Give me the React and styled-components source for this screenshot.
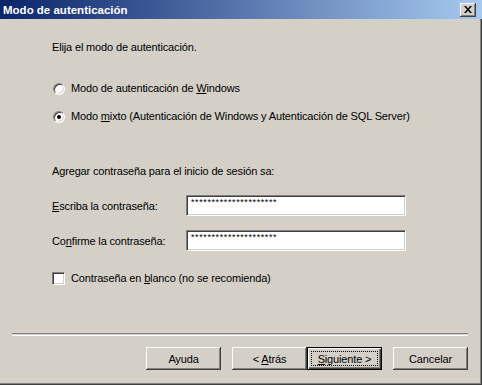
import React from "react";
import styled, { createGlobalStyle } from "styled-components";

const Global = createGlobalStyle`
  html, body { margin: 0; padding: 0; background: #d4d0c8; }
  body { font-family: "Liberation Sans", Arial, sans-serif; font-size: 11px; color: #000; letter-spacing: -0.15px; }
`;

const Window = styled.div`
  width: 482px;
  height: 385px;
  box-sizing: border-box;
  background: #d4d0c8;
  display: flex;
  flex-direction: column;
  box-shadow: inset -1px -1px 0 #404040, inset -2px -2px 0 #808080;
  overflow: hidden;
`;

const TitleBar = styled.div`
  height: 19px;
  flex: none;
  display: flex;
  align-items: center;
  justify-content: space-between;
  padding: 0 6px 0 3px;
  background: linear-gradient(to right, #0a246a, #a6caf0);
`;

const Title = styled.span`
  color: #fff;
  font-weight: bold;
  font-size: 11.5px;
  letter-spacing: 0;
`;

const CloseBtn = styled.div`
  width: 16px;
  height: 14px;
  box-sizing: border-box;
  background: #d4d0c8;
  display: flex;
  align-items: center;
  justify-content: center;
  box-shadow: inset -1px -1px 0 #404040, inset 1px 1px 0 #fff, inset -2px -2px 0 #808080;
`;

const Body = styled.div`
  flex: 1;
  padding: 22px 0 0 52px;
  display: flex;
  flex-direction: column;
`;

const Line = styled.div`
  height: 13px;
  line-height: 13px;
  white-space: nowrap;
  margin-top: ${(p) => p.$top || 0}px;
`;

const OptionRow = styled.label`
  display: flex;
  align-items: center;
  gap: 6px;
  height: 13px;
  line-height: 13px;
  white-space: nowrap;
  margin-top: ${(p) => p.$top || 0}px;
  margin-left: ${(p) => p.$left || 0}px;
`;

const Radio = styled.span`
  width: 12px;
  height: 12px;
  box-sizing: border-box;
  border-radius: 50%;
  background: #fff;
  border: 1px solid;
  border-color: #808080 #fff #fff #808080;
  box-shadow: inset 1px 1px 0 #404040, inset -1px -1px 0 #d4d0c8;
  display: flex;
  align-items: center;
  justify-content: center;
  &::after {
    content: "";
    width: 4px;
    height: 4px;
    border-radius: 50%;
    background: ${(p) => (p.$checked ? "#000" : "transparent")};
  }
`;

const Check = styled.span`
  width: 13px;
  height: 13px;
  box-sizing: border-box;
  background: #fff;
  border: 1px solid;
  border-color: #808080 #fff #fff #808080;
  box-shadow: inset 1px 1px 0 #404040, inset -1px -1px 0 #d4d0c8;
`;

const Key = styled.u`
  text-decoration: underline;
  text-underline-offset: 1px;
`;

const FieldRow = styled.div`
  display: flex;
  align-items: center;
  margin-top: ${(p) => p.$top || 0}px;
`;

const FieldLabel = styled.span`
  width: 134px;
  white-space: nowrap;
`;

const Edit = styled.div`
  width: 220px;
  height: 21px;
  box-sizing: border-box;
  background: #fff;
  border: 1px solid;
  border-color: #808080 #fff #fff #808080;
  box-shadow: inset 1px 1px 0 #404040, inset -1px -1px 0 #d4d0c8;
  padding: 2px 0 0 4px;
  font-size: 9px;
  line-height: 9px;
  letter-spacing: 0.6px;
  overflow: hidden;
`;

const Footer = styled.div`
  flex: none;
  padding: 0 14px 15px 12px;
`;

const Separator = styled.div`
  height: 1px;
  border-top: 1px solid #808080;
  border-bottom: 1px solid #fff;
`;

const Buttons = styled.div`
  display: flex;
  justify-content: flex-end;
  margin-top: 11px;
`;

const Button = styled.div`
  width: 75px;
  height: 23px;
  box-sizing: border-box;
  display: flex;
  align-items: center;
  justify-content: center;
  white-space: pre;
  background: #d4d0c8;
  margin-left: ${(p) => p.$gap || 0}px;
  box-shadow: ${(p) =>
    p.$default
      ? "inset 0 0 0 1px #000, inset 1px 1px 0 1px #fff, inset -2px -2px 0 0 #404040, inset -3px -3px 0 0 #808080"
      : "inset -1px -1px 0 #404040, inset 1px 1px 0 #fff, inset -2px -2px 0 #808080"};
`;

const Focus = styled.span`
  display: flex;
  align-items: center;
  justify-content: center;
  width: 67px;
  height: 15px;
  box-sizing: border-box;
  border: 1px dotted #000;
`;

export default function App() {
  return (
    <>
      <Global />
      <Window>
        <TitleBar>
          <Title>Modo de autenticación</Title>
          <CloseBtn>
            <svg width="8" height="7" viewBox="0 0 8 7">
              <path d="M0 0h2l2 2.5L6 0h2L5 3.5 8 7H6L4 4.5 2 7H0l3-3.5z" fill="#000" />
            </svg>
          </CloseBtn>
        </TitleBar>
        <Body>
          <Line>Elija el modo de autenticación.</Line>
          <OptionRow $top={28} $left={1}>
            <Radio />
            <span>
              Modo de autenticación de <Key>W</Key>indows
            </span>
          </OptionRow>
          <OptionRow $top={15} $left={1}>
            <Radio $checked />
            <span>
              Modo <Key>m</Key>ixto (Autenticación de Windows y Autenticación de SQL Server)
            </span>
          </OptionRow>
          <Line $top={42}>Agregar contraseña para el inicio de sesión sa:</Line>
          <FieldRow $top={17}>
            <FieldLabel>
              <Key>E</Key>scriba la contraseña:
            </FieldLabel>
            <Edit>*********************</Edit>
          </FieldRow>
          <FieldRow $top={14}>
            <FieldLabel>
              Co<Key>n</Key>firme la contraseña:
            </FieldLabel>
            <Edit>*********************</Edit>
          </FieldRow>
          <OptionRow $top={21}>
            <Check />
            <span>
              Contraseña en <Key>b</Key>lanco (no se recomienda)
            </span>
          </OptionRow>
        </Body>
        <Footer>
          <Separator />
          <Buttons>
            <Button>Ayuda</Button>
            <Button $gap={11}>
              <span>
                &lt; <Key>A</Key>trás
              </span>
            </Button>
            <Button $default>
              <Focus>
                <Key>S</Key>iguiente &gt;
              </Focus>
            </Button>
            <Button $gap={11}>Cancelar</Button>
          </Buttons>
        </Footer>
      </Window>
    </>
  );
}
